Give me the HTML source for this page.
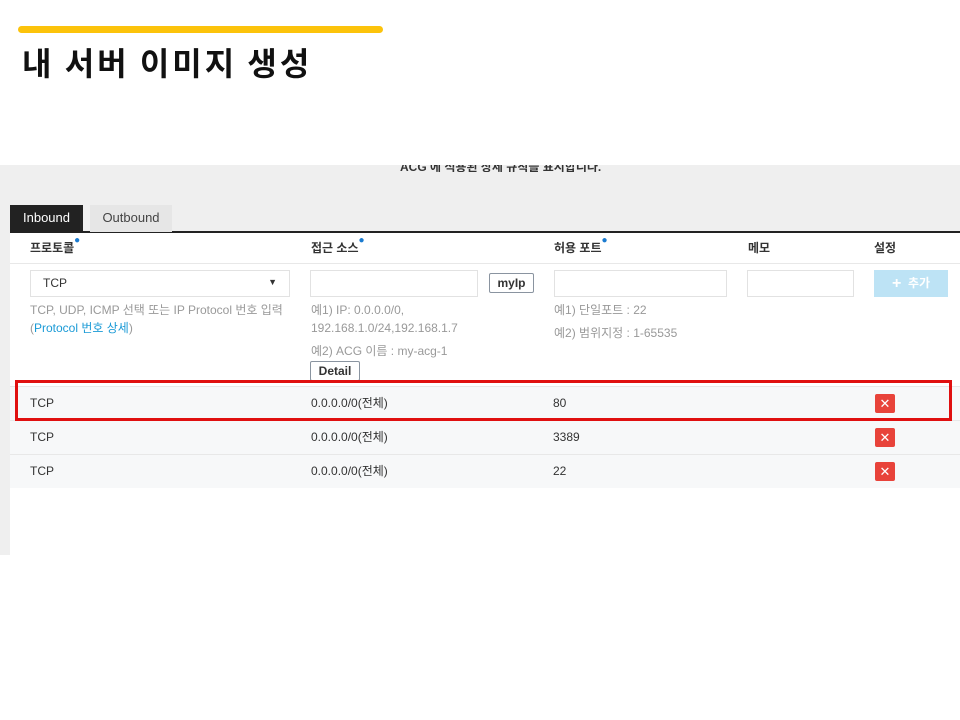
<!DOCTYPE html>
<html><head><meta charset="utf-8"><style>
*{margin:0;padding:0;box-sizing:border-box}
body{width:960px;height:720px;background:#fff;position:relative;overflow:hidden;font-family:"Liberation Sans","Noto Sans CJK KR",sans-serif;color:#333}
.abs{position:absolute}
.bar{left:18px;top:26px;width:365px;height:7px;background:#fcc30b;border-radius:4px}
.title{left:22px;top:40px;font-size:32px;font-weight:bold;color:#111;letter-spacing:3px;font-family:"Noto Sans CJK KR",sans-serif;line-height:44px}
.gray{left:0;top:165px;width:960px;height:390px;background:#efefef}
.white{left:10px;top:232px;width:950px;height:323px;background:#fff}
.hline{left:10px;top:231px;width:950px;height:2px;background:#222}
.tab1{left:10px;top:205px;width:73px;height:27px;background:#222;color:#fff;font-size:13px;text-align:center;line-height:26px}
.tab2{left:90px;top:205px;width:82px;height:27px;background:#e6e6e6;color:#444;font-size:13px;text-align:center;line-height:26px}
.th{top:239px;font-size:12px;font-weight:bold;color:#333}
.th i{color:#1a7bd0;font-style:normal;font-size:10px;vertical-align:top;position:relative;top:-4px}
.sep{left:10px;width:950px;height:1px;background:#e8e8e8}
.inp{height:27px;border:1px solid #e2e2e2;background:#fff}
.help{font-size:12px;color:#999;line-height:18px}
.btn{border:1px solid #8a94a0;border-radius:2px;font-size:12px;font-weight:bold;color:#333;text-align:center;background:#fff}
.row{left:10px;width:950px;height:33px;background:#f7f8f9;font-size:12px;color:#333}
.row span{position:absolute;top:9px;line-height:14px;height:14px}
.x{position:absolute;left:865px;top:7px;width:20px;height:19px;background:#e8433a;color:#fff;text-align:center;font-size:13px;line-height:19px;border-radius:2px}
</style></head><body>
<div class="abs bar"></div>
<div class="abs title">내 서버 이미지 생성</div>
<div class="abs gray"></div>
<div class="abs" style="left:400px;top:158px;font-size:12px;font-weight:bold;color:#333;height:14px;overflow:hidden;line-height:14px;top:158px"><span style="position:relative;top:2px">ACG 에 적용된 상세 규칙을 표시합니다.</span></div>
<div class="abs" style="left:0;top:150px;width:960px;height:15px;background:#fff"></div>
<div class="abs white"></div>
<div class="abs hline"></div>
<div class="abs tab1">Inbound</div>
<div class="abs tab2">Outbound</div>
<div class="abs th" style="left:30px">프로토콜<i>●</i></div>
<div class="abs th" style="left:311px">접근 소스<i>●</i></div>
<div class="abs th" style="left:554px">허용 포트<i>●</i></div>
<div class="abs th" style="left:748px">메모</div>
<div class="abs th" style="left:874px">설정</div>
<div class="abs sep" style="top:263px"></div>
<div class="abs inp" style="left:30px;top:270px;width:260px;font-size:12px;padding:5px 12px">TCP<span style="position:absolute;right:12px;top:6px;font-size:9px">▼</span></div>
<div class="abs inp" style="left:310px;top:270px;width:168px"></div>
<div class="abs btn" style="left:489px;top:273px;width:45px;height:20px;line-height:18px">myIp</div>
<div class="abs inp" style="left:554px;top:270px;width:173px"></div>
<div class="abs inp" style="left:747px;top:270px;width:107px"></div>
<div class="abs" style="left:874px;top:270px;width:74px;height:27px;background:#bde3f5;color:#fff;font-size:12px;font-weight:bold;text-align:center;line-height:27px"><span style="font-size:16px;vertical-align:-1px">+</span>&nbsp; 추가</div>
<div class="abs help" style="left:30px;top:301px">TCP, UDP, ICMP 선택 또는 IP Protocol 번호 입력<br>(<span style="color:#1a9ad6">Protocol 번호 상세</span>)</div>
<div class="abs help" style="left:311px;top:301px">예1) IP: 0.0.0.0/0,<br>192.168.1.0/24,192.168.1.7</div>
<div class="abs help" style="left:311px;top:342px">예2) ACG 이름 : my-acg-1</div>
<div class="abs btn" style="left:310px;top:361px;width:50px;height:20px;line-height:18px">Detail</div>
<div class="abs help" style="left:554px;top:301px">예1) 단일포트 : 22</div>
<div class="abs help" style="left:554px;top:324px">예2) 범위지정 : 1-65535</div>
<div class="abs sep" style="top:386px"></div>
<div class="abs row" style="top:387px"><span style="left:20px">TCP</span><span style="left:301px">0.0.0.0/0(전체)</span><span style="left:543px">80</span><div class="x">✕</div></div>
<div class="abs sep" style="top:420px"></div>
<div class="abs row" style="top:421px"><span style="left:20px">TCP</span><span style="left:301px">0.0.0.0/0(전체)</span><span style="left:543px">3389</span><div class="x">✕</div></div>
<div class="abs sep" style="top:454px"></div>
<div class="abs row" style="top:455px"><span style="left:20px">TCP</span><span style="left:301px">0.0.0.0/0(전체)</span><span style="left:543px">22</span><div class="x">✕</div></div>
<div class="abs" style="left:15px;top:380px;width:937px;height:41px;border:3px solid #e01010"></div>
</body></html>
